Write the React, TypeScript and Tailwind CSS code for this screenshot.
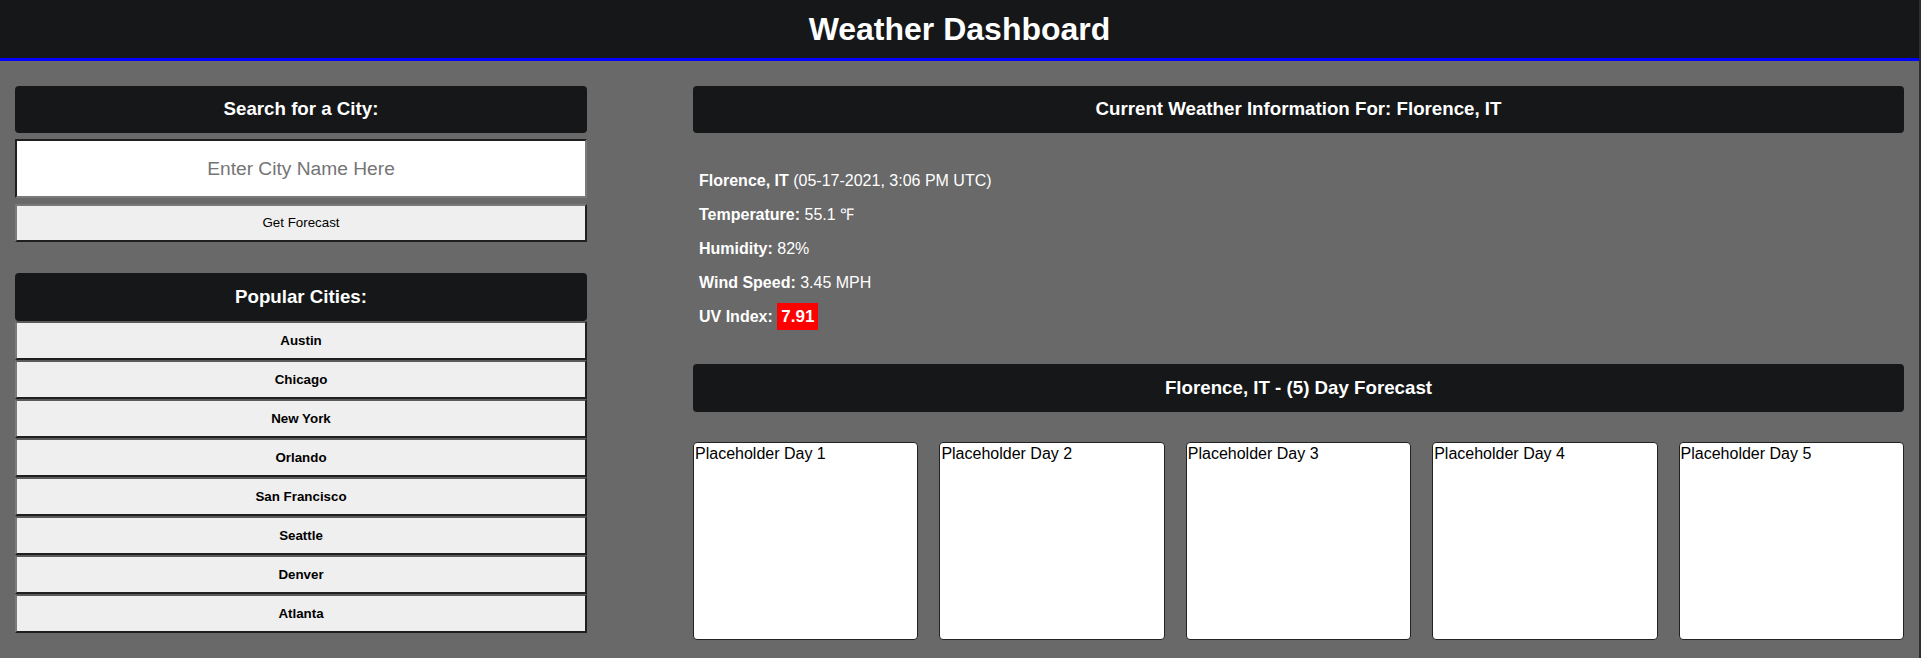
import React from 'react';

const cities = ['Austin', 'Chicago', 'New York', 'Orlando', 'San Francisco', 'Seattle', 'Denver', 'Atlanta'];
const days = [1, 2, 3, 4, 5];

const SectionTitle: React.FC<{ children: React.ReactNode; className?: string }> = ({ children, className = '' }) => (
  <h3
    className={`flex h-[47px] items-center justify-center rounded-[4px] bg-[#151719] text-[18.72px] font-bold text-white ${className}`}
  >
    {children}
  </h3>
);

const App: React.FC = () => {
  return (
    <div className="min-h-screen w-full border-r-2 border-[#2e2e2e] bg-[#696969] pb-[17px] font-['Liberation_Sans',Arial,sans-serif] text-black">
      {/* Header */}
      <header className="flex h-[61px] items-center justify-center border-b-[3px] border-[#0000ff] bg-[#151719]">
        <h1 className="text-[32px] font-bold text-white">Weather Dashboard</h1>
      </header>

      <div className="flex pt-[25px]">
        {/* Search column */}
        <aside className="ml-[15px] w-[572px] shrink-0">
          <SectionTitle>Search for a City:</SectionTitle>
          <input
            type="text"
            placeholder="Enter City Name Here"
            className="mt-[6px] block h-[59px] w-full border-2 border-b-[#7a7a7a] border-l-[#1f1f1f] border-r-[#7a7a7a] border-t-[#1f1f1f] bg-white text-center text-[19.2px] outline-none placeholder:text-[#757575]"
          />
          <button className="mt-[6px] block h-[38px] w-full border-2 border-b-[#1f1f1f] border-l-[#7a7a7a] border-r-[#1f1f1f] border-t-[#7a7a7a] bg-[#efefef] text-[13.33px] text-black">
            Get Forecast
          </button>

          <SectionTitle className="mt-[31px] h-[48px]">Popular Cities:</SectionTitle>
          <div className="flex flex-col">
            {cities.map((city) => (
              <button
                key={city}
                className="block h-[39px] w-full border-2 border-b-[#1f1f1f] border-l-[#7a7a7a] border-r-[#1f1f1f] border-t-[#5a5a5a] bg-[#efefef] text-[13.33px] font-bold text-black"
              >
                {city}
              </button>
            ))}
          </div>
        </aside>

        {/* Weather column */}
        <main className="ml-[106px] w-[1211px] shrink-0">
          <SectionTitle>Current Weather Information For: Florence, IT</SectionTitle>

          <div className="flex flex-col gap-[16px] px-[6px] pt-[39px] text-[16px] leading-[18px] text-white">
            <p>
              <span className="font-bold">Florence, IT</span> (05-17-2021, 3:06 PM UTC)
            </p>
            <p>
              <span className="font-bold">Temperature:</span> 55.1 ℉
            </p>
            <p>
              <span className="font-bold">Humidity:</span> 82%
            </p>
            <p>
              <span className="font-bold">Wind Speed:</span> 3.45 MPH
            </p>
            <p>
              <span className="font-bold">UV Index:</span>{' '}
              <span className="bg-[#ff0000] px-[4px] py-[4px] text-[17px] font-bold text-white">7.91</span>
            </p>
          </div>

          <SectionTitle className="mt-[38px] h-[48px]">Florence, IT - (5) Day Forecast</SectionTitle>

          {/* Forecast cards */}
          <div className="mt-[30px] grid grid-cols-5 gap-[21px]">
            {days.map((d) => (
              <div
                key={d}
                className="h-[198px] rounded-[4px] border border-[#222] bg-white px-[1px] pt-[2px] text-[16px] leading-[18px] text-black"
              >
                Placeholder Day {d}
              </div>
            ))}
          </div>
        </main>
      </div>
    </div>
  );
};

export default App;
